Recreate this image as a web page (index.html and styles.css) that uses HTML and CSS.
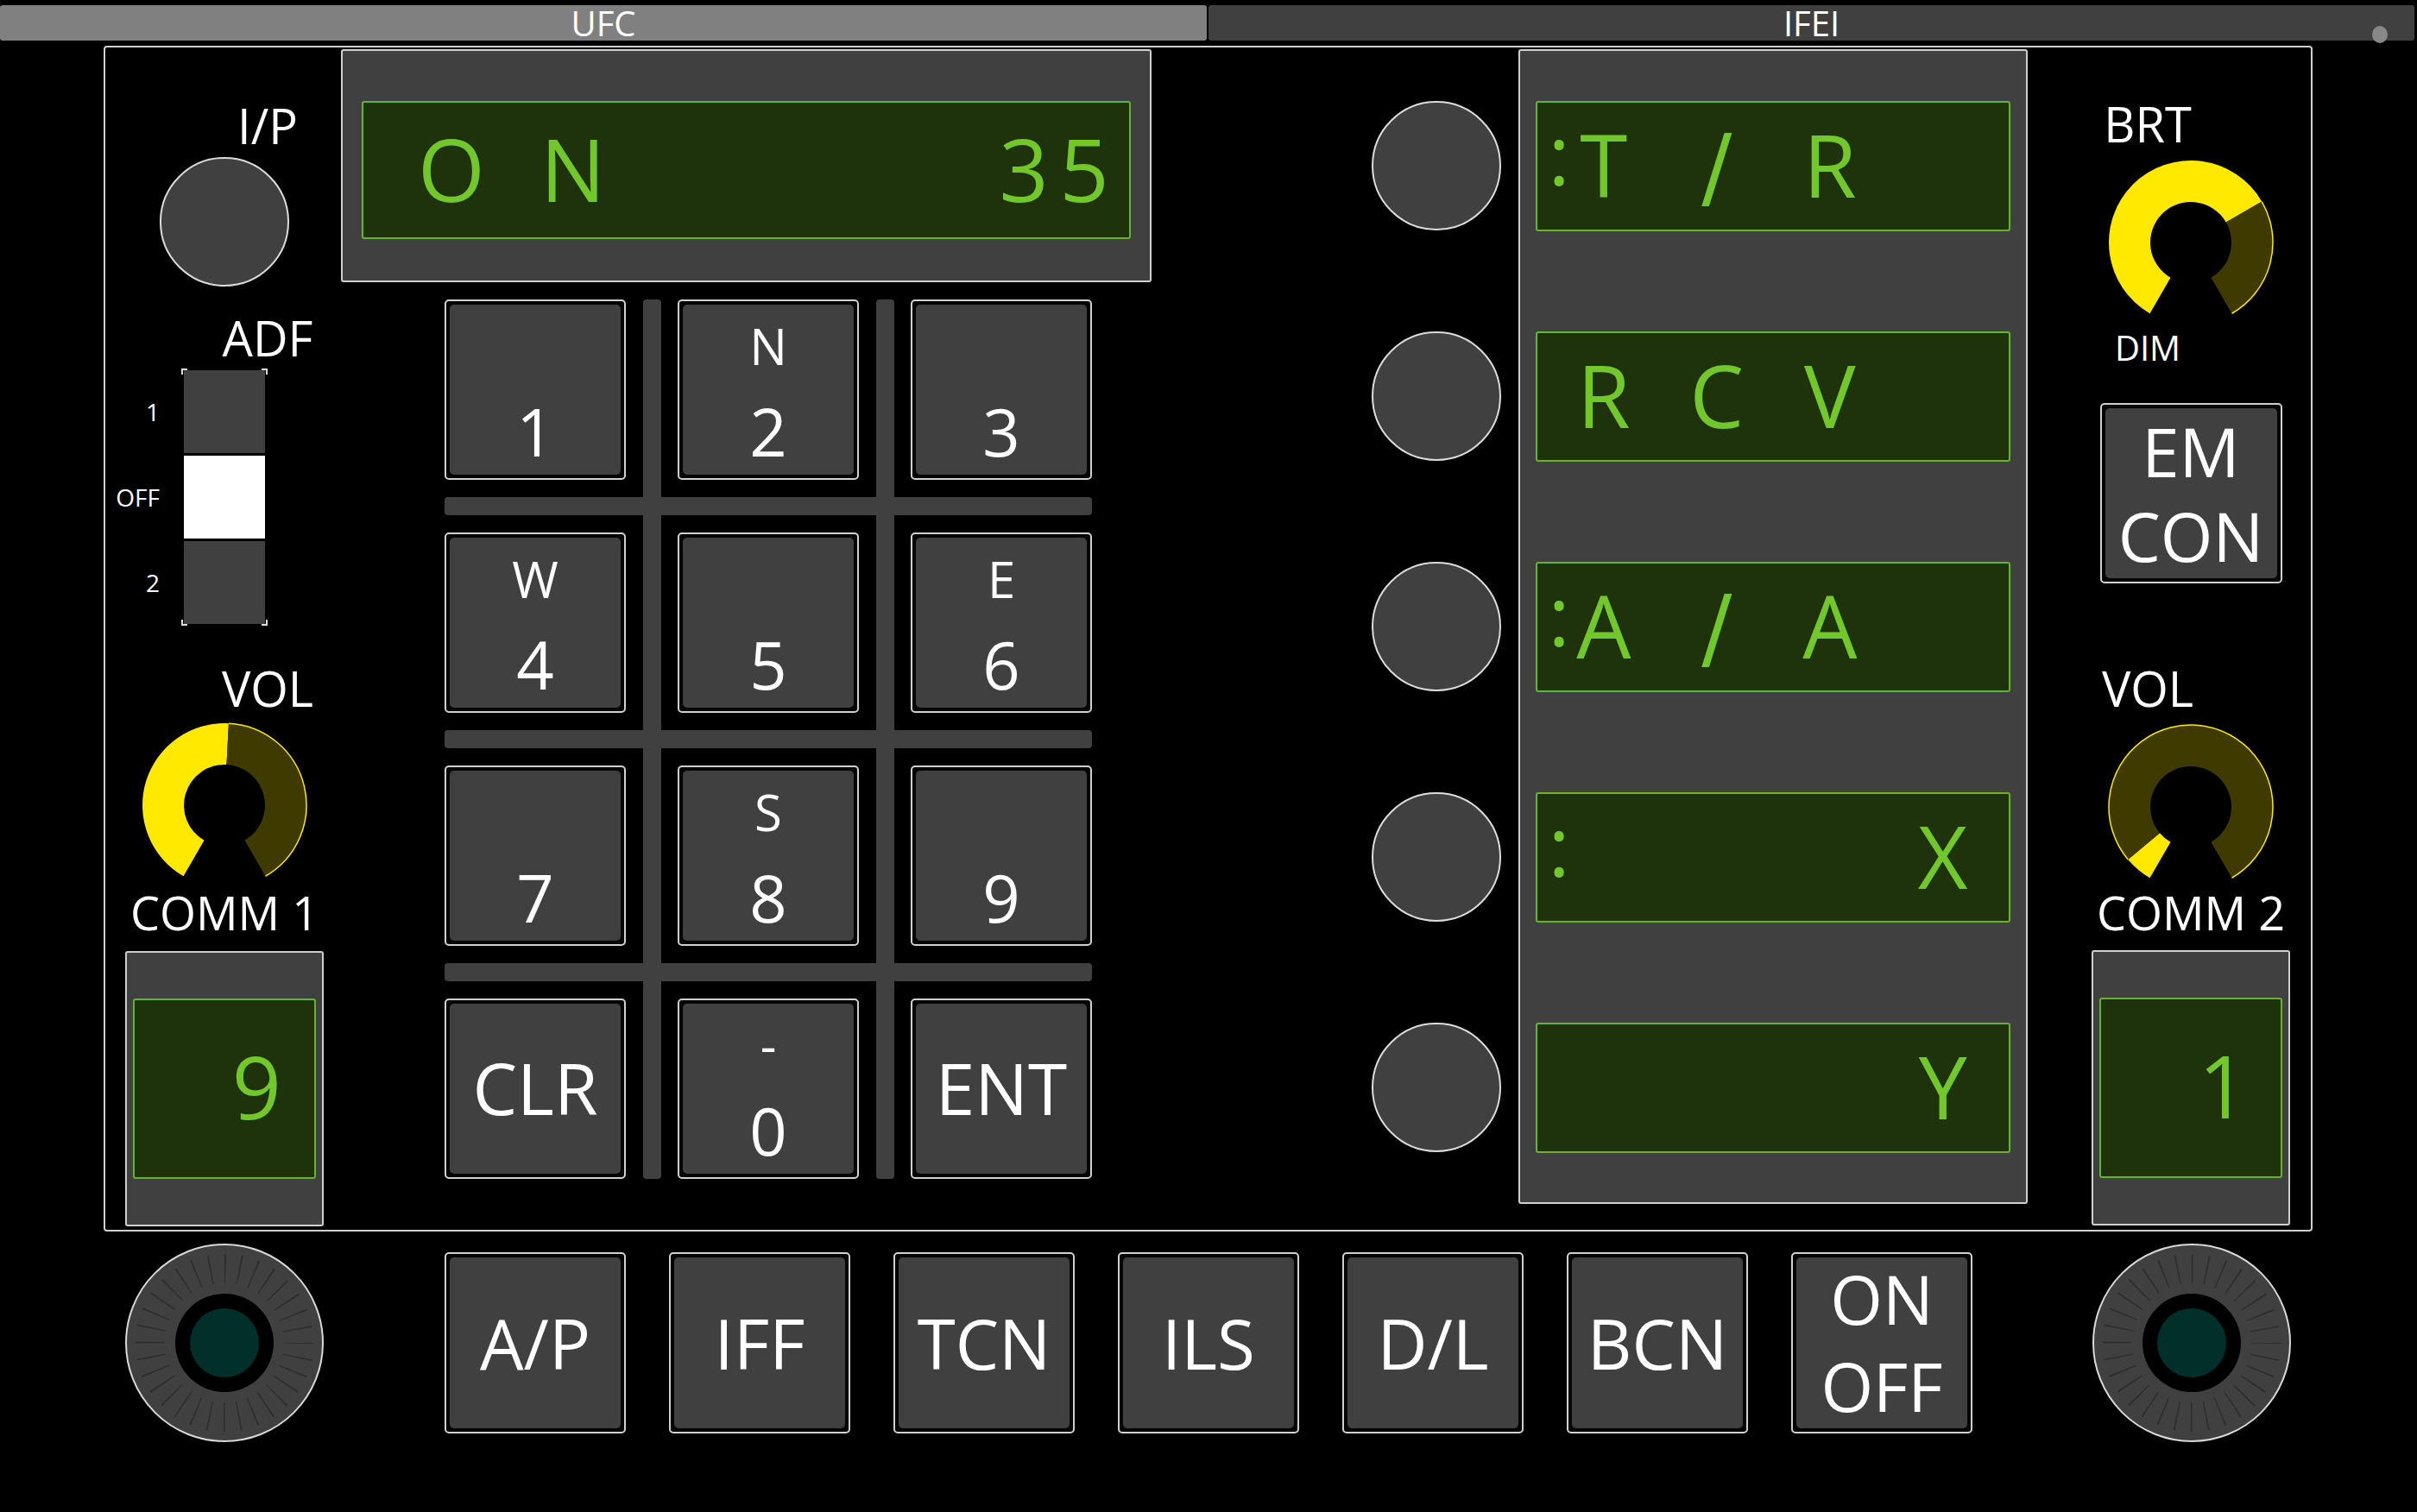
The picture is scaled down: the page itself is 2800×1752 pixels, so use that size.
FILE: index.html
```html
<!DOCTYPE html>
<html>
<head>
<meta charset="utf-8">
<title>UFC / IFEI</title>
<link rel="stylesheet" href="styles.css">
</head>
<body>
<div class="tabs">
  <div class="tab tab-ufc">UFC</div>
  <div class="tab tab-ifei">IFEI</div>
  <span class="tab-dot"></span>
</div>

<div class="panel">
  <div class="side side-left">
    <div class="lbl lbl-l lbl-ip">I/P</div>
    <div class="round-btn ip-btn"></div>
    <div class="lbl lbl-l lbl-adf">ADF</div>
    <div class="adf">
      <div class="adf-labels"><span>1</span><span>OFF</span><span>2</span></div>
      <div class="adf-switch"><div class="seg"></div><div class="seg on"></div><div class="seg"></div></div>
    </div>
    <div class="lbl lbl-l lbl-vol">VOL</div>
    <svg class="gauge gauge-l" viewBox="0 0 200 186" width="200" height="186">
      <path class="g-on" d="M52.5 182.27 A95 95 0 0 1 104.97 5.13 L102.46 53.07 A47 47 0 0 0 76.5 140.7 Z"/>
      <path class="g-off" d="M104.97 5.13 A95 95 0 0 1 147.5 182.27 L123.5 140.7 A47 47 0 0 0 102.46 53.07 Z"/>
      <path class="g-edge" d="M104.97 5.13 A95 95 0 0 1 147.5 182.27"/>
    </svg>
    <div class="lbl-comm lbl-comm1">COMM 1</div>
    <div class="chan chan-l"><div class="chan-disp">9</div></div>
  </div>

  <div class="ufc">
    <div class="ufc-disp">
      <div class="ufc-screen">
        <div class="grp grp-l"><span>O</span><span></span><span>N</span></div>
        <div class="grp grp-r"><span>3</span><span>5</span></div>
      </div>
    </div>
    <div class="keypad">
      <div class="vbar vb1"></div><div class="vbar vb2"></div>
      <div class="hbar hb1"></div><div class="hbar hb2"></div><div class="hbar hb3"></div>

      <div class="key c1 r1"><div class="face"><span class="kl">&nbsp;</span><span class="kd">1</span></div></div>
      <div class="key c2 r1"><div class="face"><span class="kl">N</span><span class="kd">2</span></div></div>
      <div class="key c3 r1"><div class="face"><span class="kl">&nbsp;</span><span class="kd">3</span></div></div>

      <div class="key c1 r2"><div class="face"><span class="kl">W</span><span class="kd">4</span></div></div>
      <div class="key c2 r2"><div class="face"><span class="kl">&nbsp;</span><span class="kd">5</span></div></div>
      <div class="key c3 r2"><div class="face"><span class="kl">E</span><span class="kd">6</span></div></div>

      <div class="key c1 r3"><div class="face"><span class="kl">&nbsp;</span><span class="kd">7</span></div></div>
      <div class="key c2 r3"><div class="face"><span class="kl">S</span><span class="kd">8</span></div></div>
      <div class="key c3 r3"><div class="face"><span class="kl">&nbsp;</span><span class="kd">9</span></div></div>

      <div class="key c1 r4"><div class="face face-word">CLR</div></div>
      <div class="key c2 r4"><div class="face"><span class="kl">-</span><span class="kd">0</span></div></div>
      <div class="key c3 r4"><div class="face face-word">ENT</div></div>
    </div>
  </div>

  <div class="osb-col">
    <div class="round-btn"></div>
    <div class="round-btn"></div>
    <div class="round-btn"></div>
    <div class="round-btn"></div>
    <div class="round-btn"></div>
  </div>

  <div class="ifei">
    <div class="ifei-row"><span class="colon">:</span><span class="cell">T</span><span class="cell"></span><span class="cell sl">/</span><span class="cell"></span><span class="cell">R</span></div>
    <div class="ifei-row"><span class="colon"></span><span class="cell">R</span><span class="cell"></span><span class="cell">C</span><span class="cell"></span><span class="cell">V</span></div>
    <div class="ifei-row"><span class="colon">:</span><span class="cell">A</span><span class="cell"></span><span class="cell sl">/</span><span class="cell"></span><span class="cell">A</span></div>
    <div class="ifei-row"><span class="colon">:</span><span class="cell"></span><span class="cell"></span><span class="cell"></span><span class="cell"></span><span class="cell"></span><span class="cell"></span><span class="cell">X</span></div>
    <div class="ifei-row"><span class="colon"></span><span class="cell"></span><span class="cell"></span><span class="cell"></span><span class="cell"></span><span class="cell"></span><span class="cell"></span><span class="cell">Y</span></div>
  </div>

  <div class="side side-right">
    <div class="lbl lbl-r lbl-brt">BRT</div>
    <svg class="gauge gauge-brt" viewBox="0 0 200 186" width="200" height="186">
      <path class="g-on" d="M52.5 182.27 A95 95 0 1 1 182.27 52.5 L140.7 76.5 A47 47 0 1 0 76.5 140.7 Z"/>
      <path class="g-off" d="M182.27 52.5 A95 95 0 0 1 147.5 182.27 L123.5 140.7 A47 47 0 0 0 140.7 76.5 Z"/>
      <path class="g-edge" d="M182.27 52.5 A95 95 0 0 1 147.5 182.27"/>
    </svg>
    <div class="lbl-dim">DIM</div>
    <div class="btn emcon"><div class="btn-face">EM<br>CON</div></div>
    <div class="lbl lbl-r lbl-vol2">VOL</div>
    <svg class="gauge gauge-r" viewBox="0 0 200 186" width="200" height="186">
      <path class="g-on" d="M52.5 182.27 A95 95 0 0 1 27.23 161.06 L64 130.21 A47 47 0 0 0 76.5 140.7 Z"/>
      <path class="g-off" d="M27.23 161.06 A95 95 0 1 1 147.5 182.27 L123.5 140.7 A47 47 0 1 0 64 130.21 Z"/>
      <path class="g-edge" d="M27.23 161.06 A95 95 0 1 1 147.5 182.27"/>
    </svg>
    <div class="lbl-comm lbl-comm2">COMM 2</div>
    <div class="chan chan-r"><div class="chan-disp">1</div></div>
  </div>
</div>

<div class="bottom">
  <svg class="knob" viewBox="0 0 230 230" width="230" height="230">
    <circle class="k-body" cx="115" cy="115" r="114"/>
    <circle class="k-ticks" cx="115" cy="115" r="86"/>
    <circle class="k-ring" cx="115" cy="115" r="57"/>
    <circle class="k-core" cx="115" cy="115" r="40"/>
  </svg>
  <div class="btnrow">
    <div class="btn"><div class="btn-face">A/P</div></div>
    <div class="btn"><div class="btn-face">IFF</div></div>
    <div class="btn"><div class="btn-face">TCN</div></div>
    <div class="btn"><div class="btn-face">ILS</div></div>
    <div class="btn"><div class="btn-face">D/L</div></div>
    <div class="btn"><div class="btn-face">BCN</div></div>
    <div class="btn"><div class="btn-face btn-two">ON<br>OFF</div></div>
  </div>
  <svg class="knob" viewBox="0 0 230 230" width="230" height="230">
    <circle class="k-body" cx="115" cy="115" r="114"/>
    <circle class="k-ticks" cx="115" cy="115" r="86"/>
    <circle class="k-ring" cx="115" cy="115" r="57"/>
    <circle class="k-core" cx="115" cy="115" r="40"/>
  </svg>
</div>
</body>
</html>
```

FILE: styles.css
```css
* { box-sizing: border-box; }
html, body { margin: 0; padding: 0; background: #000; }
body {
  width: 2800px;
  height: 1752px;
  overflow: hidden;
  font-family: "Open Sans", "Noto Sans", sans-serif;
  color: #fff;
}

/* ---------- tabs ---------- */
.tabs {
  position: relative;
  display: flex;
  gap: 2px;
  margin-top: 6px;
  height: 41px;
}
.tab {
  height: 41px;
  line-height: 41px;
  text-align: center;
  font-size: 40px;
  color: #fff;
  background: #404040;
  border-radius: 3px;
}
.tab-ufc { width: 1398px; background: #808080; }
.tab-ifei { width: 1397px; }
.tab-dot {
  position: absolute;
  left: 2748px;
  top: 24px;
  width: 18px;
  height: 20px;
  border-radius: 50%;
  background: #888;
}

/* ---------- main panel ---------- */
.panel {
  margin: 6px 0 0 120px;
  width: 2559px;
  height: 1374px;
  border: 2px solid #cfcfcf;
  border-radius: 4px;
  display: flex;
  align-items: flex-start;
  padding: 0 24px 0 23px;
}

.side {
  flex: none;
  width: 230px;
  display: flex;
  flex-direction: column;
  align-items: center;
}
.side-left { margin-right: 20px; }

.lbl {
  font-size: 56px;
  line-height: 56px;
  height: 56px;
  white-space: nowrap;
}
.lbl-l { align-self: stretch; padding-left: 100px; text-align: center; }
.lbl-r { align-self: stretch; padding-right: 100px; text-align: center; }

.lbl-ip { margin-top: 62px; }
.ip-btn { margin-top: 9px; }
.lbl-adf { margin-top: 31px; }
.lbl-vol { margin-top: 44px; }

.round-btn {
  flex: none;
  width: 150px;
  height: 150px;
  border-radius: 50%;
  background: #404040;
  border: 2px solid #dcdcdc;
}

/* ADF switch */
.adf {
  align-self: flex-start;
  margin: 8px 0 0 -11px;
  display: flex;
  gap: 25px;
}
.adf-labels {
  width: 51px;
  padding: 2px 0;
  display: flex;
  flex-direction: column;
  gap: 3px;
}
.adf-labels span {
  height: 96px;
  display: flex;
  align-items: center;
  justify-content: flex-end;
  font-size: 28px;
  line-height: 28px;
}
.adf-switch {
  width: 100px;
  height: 298px;
  padding: 2px 3px;
  display: flex;
  flex-direction: column;
  gap: 3px;
  background:
    linear-gradient(#ddd, #ddd) left top / 7px 2px no-repeat,
    linear-gradient(#ddd, #ddd) left top / 2px 7px no-repeat,
    linear-gradient(#ddd, #ddd) right top / 7px 2px no-repeat,
    linear-gradient(#ddd, #ddd) right top / 2px 7px no-repeat,
    linear-gradient(#ddd, #ddd) left bottom / 7px 2px no-repeat,
    linear-gradient(#ddd, #ddd) left bottom / 2px 7px no-repeat,
    linear-gradient(#ddd, #ddd) right bottom / 7px 2px no-repeat,
    linear-gradient(#ddd, #ddd) right bottom / 2px 7px no-repeat;
}
.seg { height: 96px; background: #404040; }
.seg.on { background: #fff; }

/* gauges */
.gauge { display: block; flex: none; }
.gauge-l { margin-top: 8px; }
.g-on { fill: #ffe900; }
.g-off { fill: #3f3a00; }
.g-edge { fill: none; stroke: #ffe900; stroke-width: 1.5; }

.lbl-comm {
  font-size: 54px;
  line-height: 54px;
  height: 54px;
  white-space: nowrap;
  text-align: center;
}
.lbl-comm1 { margin-top: 11px; }
.lbl-comm2 { margin-top: 9px; }

/* channel displays */
.chan {
  width: 230px;
  height: 319px;
  border: 2px solid #cfcfcf;
  border-radius: 3px;
  background: #404040;
  padding: 53px 7px;
}
.chan-l { margin-top: 18px; }
.chan-r { margin-top: 17px; }
.chan-disp {
  height: 209px;
  background: #1e330b;
  border: 2px solid #66b32c;
  border-radius: 3px;
  display: flex;
  align-items: center;
  justify-content: flex-end;
  padding: 0 38px 8px 0;
  font-size: 100px;
  line-height: 100px;
  color: #72c72a;
}

/* ---------- UFC ---------- */
.ufc {
  flex: none;
  width: 939px;
  margin-right: 255px;
}
.ufc-disp {
  margin-top: 2px;
  height: 270px;
  border: 2px solid #cfcfcf;
  border-radius: 3px;
  background: #404040;
  padding: 58px 22px 48px;
}
.ufc-screen {
  height: 160px;
  background: #1e330b;
  border: 2px solid #66b32c;
  border-radius: 3px;
  display: flex;
  align-items: center;
  justify-content: space-between;
  padding: 0 17px 5px 63px;
  font-size: 100px;
  line-height: 100px;
  color: #72c72a;
}
.grp { display: flex; }
.grp span { display: block; text-align: center; }
.grp-l span { width: 71px; }
.grp-r span { width: 70px; }

.keypad {
  margin: 20px 0 0 120px;
  display: grid;
  grid-template-columns: 210px 60px 210px 60px 210px;
  grid-template-rows: 209px 61px 209px 61px 209px 61px 209px;
}
.vbar {
  grid-row: 1 / -1;
  justify-self: center;
  width: 21px;
  background: #404040;
  border-radius: 4px;
}
.vb1 { grid-column: 2; }
.vb2 { grid-column: 4; }
.hbar {
  grid-column: 1 / -1;
  align-self: center;
  height: 21px;
  background: #404040;
  border-radius: 4px;
}
.hb1 { grid-row: 2; }
.hb2 { grid-row: 4; }
.hb3 { grid-row: 6; }

.c1 { grid-column: 1; }
.c2 { grid-column: 3; }
.c3 { grid-column: 5; }
.r1 { grid-row: 1; }
.r2 { grid-row: 3; }
.r3 { grid-row: 5; }
.r4 { grid-row: 7; }

.key, .btn {
  border: 2px solid #d0d0d0;
  border-radius: 5px;
  padding: 4px;
  background: #050505;
}
.face, .btn-face {
  width: 100%;
  height: 100%;
  background: #404040;
  border-radius: 5px;
}
.face {
  display: flex;
  flex-direction: column;
  justify-content: flex-end;
  align-items: center;
  padding-bottom: 12px;
}
.kl { font-size: 58px; line-height: 58px; height: 58px; margin-bottom: 32px; }
.kd { font-size: 76px; line-height: 76px; height: 76px; }
.face.face-word {
  justify-content: center;
  padding-bottom: 4px;
  font-size: 82px;
  line-height: 82px;
}

/* ---------- IFEI ---------- */
.osb-col {
  flex: none;
  width: 150px;
  margin-right: 20px;
  padding-top: 62px;
  display: flex;
  flex-direction: column;
  gap: 117px;
}
.ifei {
  flex: none;
  width: 590px;
  height: 1338px;
  margin: 2px 74px 0 0;
  border: 2px solid #cfcfcf;
  border-radius: 3px;
  background: #404040;
  padding: 58px 18px;
  display: flex;
  flex-direction: column;
  gap: 116px;
}
.ifei-row {
  height: 151px;
  flex: none;
  background: #1e330b;
  border: 2px solid #66b32c;
  border-radius: 3px;
  display: flex;
  align-items: center;
  padding-bottom: 5px;
  color: #72c72a;
  font-size: 100px;
  line-height: 100px;
}
.colon {
  flex: none;
  width: 44px;
  padding: 0 0 24px 6px;
  text-align: center;
  font-size: 96px;
  line-height: 100px;
}
.cell {
  flex: none;
  width: 65.5px;
  text-align: center;
}
.cell.sl {
  font-family: "DejaVu Sans", "Open Sans", sans-serif;
  font-size: 104px;
  padding-top: 6px;
}

/* ---------- right side ---------- */
.lbl-brt { margin-top: 60px; }
.gauge-brt { margin-top: 10px; }
.lbl-dim {
  align-self: stretch;
  padding-right: 100px;
  text-align: center;
  margin-top: 16px;
  font-size: 40px;
  line-height: 40px;
  height: 40px;
}
.btn.emcon {
  margin-top: 44px;
  width: 211px;
  height: 209px;
}
.emcon .btn-face {
  font-size: 78px;
  line-height: 98px;
}
.lbl-vol2 { margin-top: 93px; }
.gauge-r { margin-top: 10px; }

/* ---------- bottom row ---------- */
.bottom {
  margin-top: 14px;
  height: 230px;
  padding-left: 145px;
  display: flex;
  align-items: center;
}
.knob { display: block; flex: none; }
.k-body { fill: #404040; stroke: #d8d8d8; stroke-width: 2; }
.k-ticks {
  fill: none;
  stroke: #2d2d2d;
  stroke-width: 34;
  stroke-dasharray: 1.6 15.286;
  stroke-dashoffset: 0.8;
}
.k-ring { fill: #000; }
.k-core { fill: #012f29; }

.btnrow {
  display: flex;
  gap: 50px;
  margin: 0 139px 0 140px;
}
.btn {
  width: 210px;
  height: 210px;
}
.btn-face {
  display: flex;
  align-items: center;
  justify-content: center;
  text-align: center;
  font-size: 80px;
  line-height: 80px;
  white-space: nowrap;
}
.btn-face.btn-two {
  font-size: 78px;
  line-height: 101px;
}
```
